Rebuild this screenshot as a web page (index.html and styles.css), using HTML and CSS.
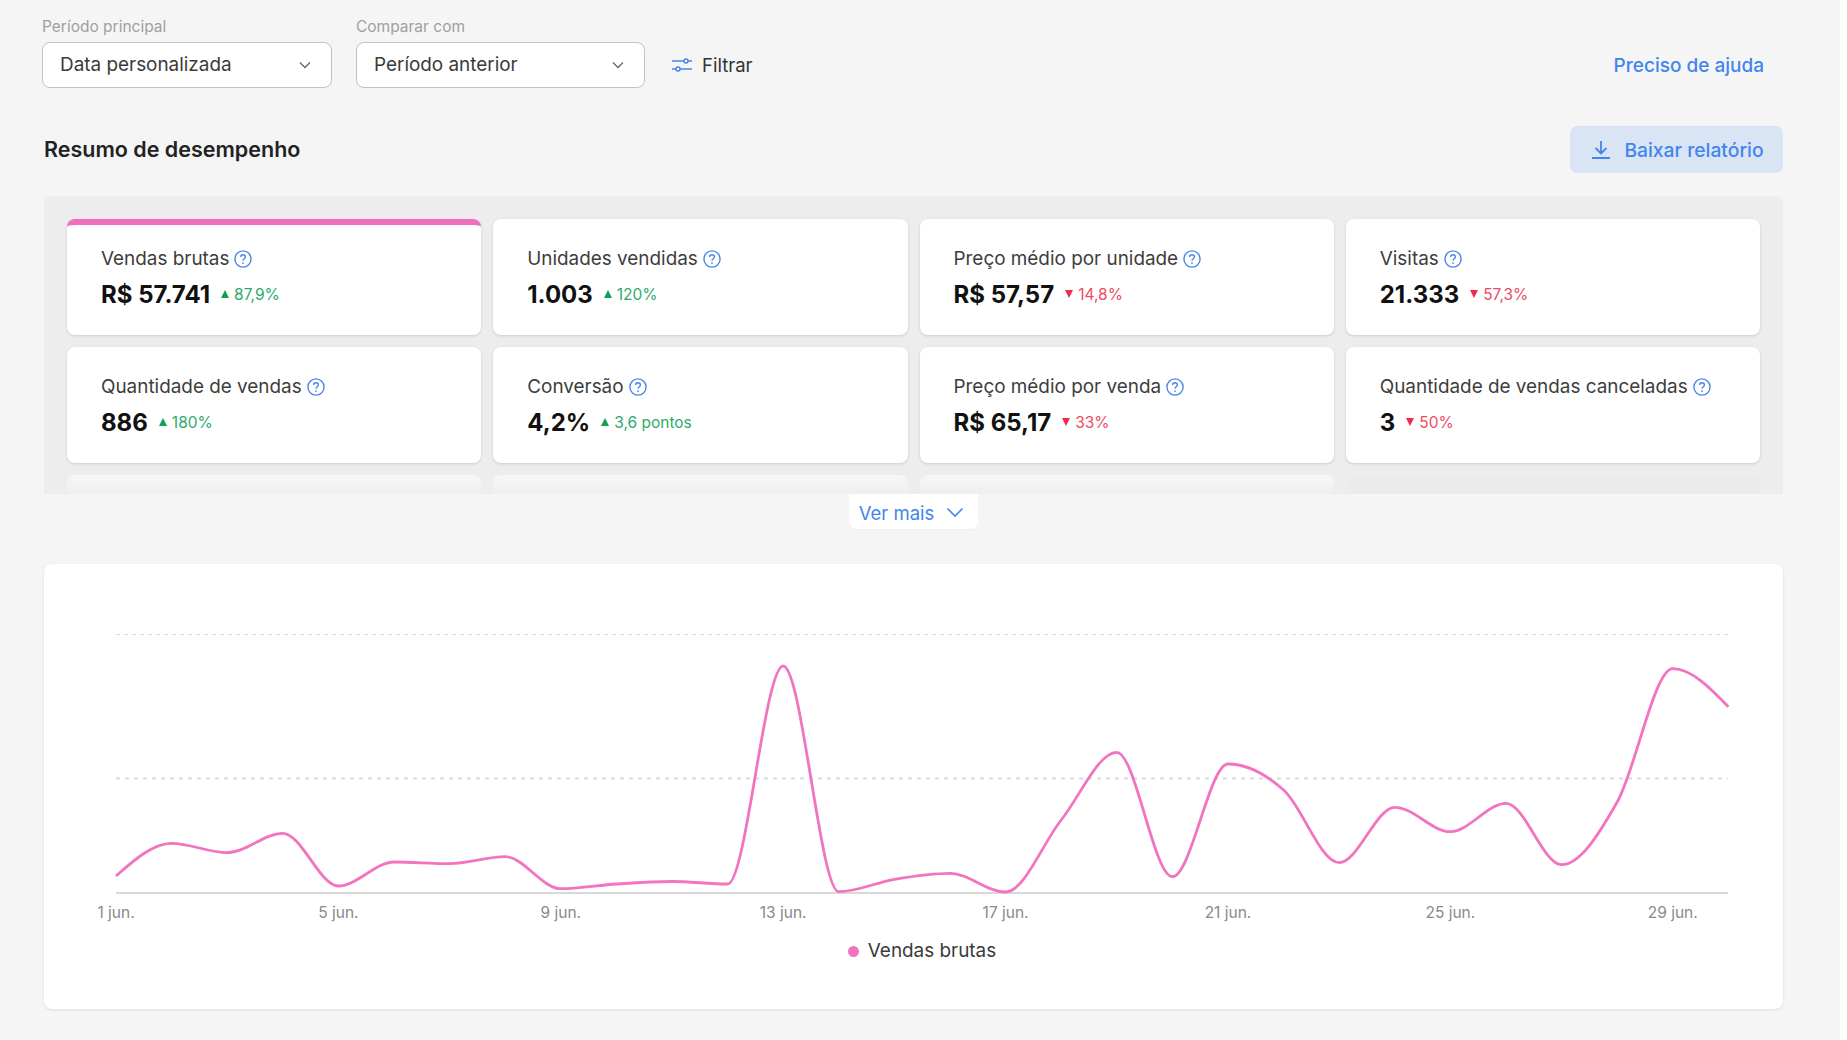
FILE: index.html
```html
<!DOCTYPE html>
<html lang="pt-BR">
<head>
<meta charset="utf-8">
<title>Resumo de desempenho</title>
<link rel="stylesheet" href="styles.css">
</head>
<body>
<main class="page">
  <div class="filters">
    <div class="field">
      <label class="field-label">Período principal</label>
      <div class="select"><span>Data personalizada</span>
        <svg class="chev" viewBox="0 0 12 8"><path d="M1 1.500l5 5 5-5"/></svg></div>
    </div>
    <div class="field">
      <label class="field-label">Comparar com</label>
      <div class="select"><span>Período anterior</span>
        <svg class="chev" viewBox="0 0 12 8"><path d="M1 1.500l5 5 5-5"/></svg></div>
    </div>
    <div class="filter-btn">
      <svg class="filter-icon" viewBox="0 0 22 18"><path d="M1 5h12M17 5h4M1 13h4M9 13h12"/><circle cx="15" cy="5" r="2"/><circle cx="7" cy="13" r="2"/></svg>
      <span>Filtrar</span>
    </div>
    <a class="help-link">Preciso de ajuda</a>
  </div>

  <div class="head">
    <h1 class="title">Resumo de desempenho</h1>
    <div class="download">
      <svg class="dl-icon" viewBox="0 0 20 20"><path d="M10 1v12M4.500 8l5.500 5.500L15.500 8M1 18h18"/></svg>
      <span>Baixar relatório</span>
    </div>
  </div>

  <section class="panel">
    <div class="grid">
      <article class="card card-active"><div class="card-title"><span>Vendas brutas</span><svg class="q" viewBox="0 0 18 18"><use href="#help"/></svg></div><div class="card-value"><b>R$ 57.741</b><span class="delta up"><i></i>87,9%</span></div></article>
      <article class="card"><div class="card-title"><span>Unidades vendidas</span><svg class="q" viewBox="0 0 18 18"><use href="#help"/></svg></div><div class="card-value"><b>1.003</b><span class="delta up"><i></i>120%</span></div></article>
      <article class="card"><div class="card-title"><span>Preço médio por unidade</span><svg class="q" viewBox="0 0 18 18"><use href="#help"/></svg></div><div class="card-value"><b>R$ 57,57</b><span class="delta down"><i></i>14,8%</span></div></article>
      <article class="card"><div class="card-title"><span>Visitas</span><svg class="q" viewBox="0 0 18 18"><use href="#help"/></svg></div><div class="card-value"><b>21.333</b><span class="delta down"><i></i>57,3%</span></div></article>
      <article class="card"><div class="card-title"><span>Quantidade de vendas</span><svg class="q" viewBox="0 0 18 18"><use href="#help"/></svg></div><div class="card-value"><b>886</b><span class="delta up"><i></i>180%</span></div></article>
      <article class="card"><div class="card-title"><span>Conversão</span><svg class="q" viewBox="0 0 18 18"><use href="#help"/></svg></div><div class="card-value"><b>4,2%</b><span class="delta up"><i></i>3,6 pontos</span></div></article>
      <article class="card"><div class="card-title"><span>Preço médio por venda</span><svg class="q" viewBox="0 0 18 18"><use href="#help"/></svg></div><div class="card-value"><b>R$ 65,17</b><span class="delta down"><i></i>33%</span></div></article>
      <article class="card"><div class="card-title"><span>Quantidade de vendas canceladas</span><svg class="q" viewBox="0 0 18 18"><use href="#help"/></svg></div><div class="card-value"><b>3</b><span class="delta down"><i></i>50%</span></div></article>
      <div class="card card-fade"></div>
      <div class="card card-fade"></div>
      <div class="card card-fade"></div>
      <div class="card card-ghost"></div>
    </div>
  </section>

  <div class="more-wrap">
    <div class="more"><span>Ver mais</span>
      <svg class="more-chev" viewBox="0 0 18 11"><path d="M1.500 1.500L9 9l7.500-7.500"/></svg></div>
  </div>

  <section class="chart">
    <svg class="plot" viewBox="116 564 1612 333">
      <path class="grid-line" d="M116 634.500H1728"/>
      <path class="grid-line mid" d="M116 778.500H1728"/>
      <path class="axis" d="M116 893H1728"/>
      <path class="series" d="M116 876c18.530-16.350 37.070-32.700 55.600-32.700c18.530 0 37.070 9.400 55.600 9.400c18.530 0 37.070-19.400 55.600-19.400c18.530 0 37.070 52.700 55.600 52.700c18.530 0 37.070-24 55.600-24c18.530 0 37.070 1.700 55.600 1.700c18.530 0 37.070-7 55.600-7c18.530 0 37.070 32 55.600 32c18.530 0 37.070-3.500 55.600-4.700c18.530-1.200 37.070-2.500 55.600-2.500c18.530 0 37.070 2.500 55.600 2.500c18.530 0 37.070-218 55.600-218c18.530 0 37.070 225.700 55.600 225.700c18.530 0 37.070-9.300 55.600-12.400c18.530-3.100 37.070-6 55.600-6c18.530 0 37.070 18.700 55.600 18.700c18.530 0 37.070-48.700 55.600-72c18.530-23.300 37.070-67.700 55.600-67.700c18.530 0 37.070 124.400 55.600 124.400c18.530 0 37.070-112.700 55.600-112.700c18.530 0 37.070 9.500 55.600 26c18.530 16.500 37.070 72.700 55.600 72.700c18.530 0 37.070-55.400 55.600-55.400c18.530 0 37.070 24.400 55.600 24.400c18.530 0 37.070-28.400 55.600-28.400c18.530 0 37.070 61.400 55.600 61.400c18.530 0 37.070-30 55.600-62.700c18.530-32.700 37.070-133.300 55.600-133.300c18.530 0 37.070 19 55.600 38"/>
    </svg>
    <div class="ticks">
      <span>1 jun.</span><span>5 jun.</span><span>9 jun.</span><span>13 jun.</span><span>17 jun.</span><span>21 jun.</span><span>25 jun.</span><span>29 jun.</span>
    </div>
    <div class="legend"><i class="dot"></i><span>Vendas brutas</span></div>
  </section>
</main>

<svg class="defs" aria-hidden="true"><defs>
  <g id="help"><circle cx="9" cy="9" r="8.100" fill="none" stroke="currentColor" stroke-width="1.400"/><path d="M6.600 7.100c0-1.400 1.100-2.300 2.400-2.300s2.400.9 2.400 2.200c0 1.800-2.400 1.800-2.400 3.700" fill="none" stroke="currentColor" stroke-width="1.400"/><circle cx="9" cy="13.100" r=".9" fill="currentColor"/></g>
</defs></svg>
</body>
</html>
```
FILE: styles.css
```css
* { box-sizing: border-box; }
html, body { margin: 0; height: 100%; background: #fff; }
body { font-family: "Inter", "Open Sans", "Liberation Sans", sans-serif; color: #333; overflow: hidden; }
.defs { width: 0; height: 0; position: absolute; }
.page { width: 1840px; height: 1040px; background: #f5f5f5; padding: 0 57px 0 44px; }

.filters { display: flex; align-items: flex-end; height: 88px; }
.field { display: flex; flex-direction: column; width: 289px; margin-right: 23px; }
.field:first-child { width: 290px; margin-left: -2px; margin-right: 24px; }
.field-label { font-size: 15.500px; line-height: 18px; color: #a0a0a0; margin-bottom: 6px; }
.select { height: 46px; background: #fff; border: 1px solid #c2c2c2; border-radius: 8px; display: flex; align-items: center; justify-content: space-between; padding: 0 20px 1px 17px; font-size: 18.900px; color: #3a3a3a; }
.chev { width: 12px; height: 8px; fill: none; stroke: #666; stroke-width: 1.300; }
.filter-btn { display: flex; align-items: center; gap: 9px; height: 46px; margin-left: 3px; font-size: 18.500px; color: #333; }
.filter-icon { width: 22px; height: 18px; fill: none; stroke: #4a86e8; stroke-width: 1.500; }
.help-link { margin-left: auto; height: 46px; line-height: 48px; font-size: 19px; font-weight: 500; color: #4285ec; margin-right: 19px; }

.head { display: flex; justify-content: space-between; align-items: center; margin-top: 38px; height: 47px; }
.title { font-size: 21.500px; font-weight: 600; margin: 0 0 2px; color: #222; }
.download { width: 213px; height: 47px; background: #d9e4f5; border-radius: 7px; display: flex; align-items: center; justify-content: center; gap: 13px; padding-left: 2px; color: #4285ec; font-size: 19.300px; font-weight: 500; }
.dl-icon { width: 20px; height: 20px; fill: none; stroke: #4285ec; stroke-width: 1.800; }

.panel { margin-top: 23px; height: 298px; background: #ededed; border-radius: 6px 6px 0 0; padding: 23px; overflow: hidden; }
.grid { display: grid; grid-template-columns: repeat(4, 1fr); grid-auto-rows: 116px; gap: 12px; }
.card { background: #fff; border-radius: 8px; box-shadow: 0 1px 3px rgba(0,0,0,.14); padding: 28px 20px 0 34px; }
.card-active { border-top: 6px solid #f06fbd; padding-top: 22px; }
.card-fade { background: linear-gradient(#f7f7f7, #eeeeee 20px); box-shadow: none; }
.card-ghost { background: #ebebeb; box-shadow: none; }
.card-title { font-size: 18.900px; line-height: 24px; color: #3d3d3d; display: flex; align-items: center; gap: 5px; white-space: nowrap; }
.q { width: 18px; height: 18px; color: #4a86e8; }
.card-value { display: flex; align-items: center; margin-top: 7px; height: 32px; }
.card-value b { font-size: 24px; font-weight: 700; color: #111; margin-right: 11px; }
.delta { font-size: 15.500px; display: flex; align-items: center; gap: 5px; }
.delta i { width: 0; height: 0; border-left: 4.500px solid transparent; border-right: 4.500px solid transparent; }
.up { color: #2dab6b; }
.up i { border-bottom: 8px solid #0e9f58; }
.down { color: #ee4a63; }
.down i { border-top: 8px solid #ee2b48; }

.more-wrap { display: flex; justify-content: center; height: 35px; }
.more { width: 129px; height: 35px; background: #fff; border-radius: 0 0 7px 7px; display: flex; align-items: center; justify-content: center; gap: 12px; color: #4285ec; font-size: 18.500px; padding: 2px 4px 0 0; box-shadow: 0 1px 1px rgba(0,0,0,.03); }
.more-chev { width: 18px; height: 11px; fill: none; stroke: #4285ec; stroke-width: 1.600; }

.chart { margin-top: 35px; height: 445px; background: #fff; border-radius: 8px; box-shadow: 0 1px 3px rgba(0,0,0,.1); padding: 0 55px 0 72px; }
.plot { display: block; width: 1612px; height: 333px; overflow: visible; }
.grid-line { stroke: #d9d9d9; stroke-width: 1; stroke-dasharray: 4 4; fill: none; }
.grid-line.mid { stroke-width: 2; stroke-dasharray: 4 5; }
.axis { stroke: #d9d9d9; stroke-width: 2; fill: none; }
.series { fill: none; stroke: #f274bf; stroke-width: 2.800; stroke-linejoin: round; }
.ticks { display: grid; grid-template-columns: repeat(8, 222.400px); margin-top: 6px; margin-left: -111.200px; font-size: 15.500px; line-height: 20px; color: #8a8a8a; text-align: center; }
.legend { display: flex; justify-content: center; align-items: center; gap: 9px; margin-top: 16px; font-size: 18.900px; line-height: 24px; color: #3a3a3a; }
.dot { width: 11px; height: 11px; border-radius: 50%; background: #f274bf; }
```
